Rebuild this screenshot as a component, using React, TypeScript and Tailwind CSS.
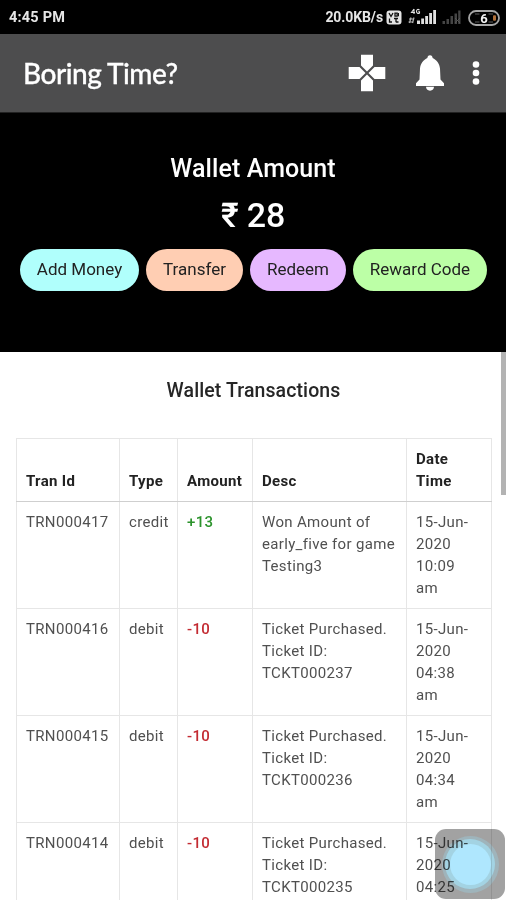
import { clsx } from "clsx";

type Transaction = {
  id: string;
  type: "credit" | "debit";
  amount: number;
  desc: string[];
  date: string[];
};

const transactions: Transaction[] = [
  { id: "TRN000417", type: "credit", amount: 13, desc: ["Won Amount of", "early_five for game", "Testing3"], date: ["15-Jun-", "2020", "10:09", "am"] },
  { id: "TRN000416", type: "debit", amount: -10, desc: ["Ticket Purchased.", "Ticket ID:", "TCKT000237"], date: ["15-Jun-", "2020", "04:38", "am"] },
  { id: "TRN000415", type: "debit", amount: -10, desc: ["Ticket Purchased.", "Ticket ID:", "TCKT000236"], date: ["15-Jun-", "2020", "04:34", "am"] },
  { id: "TRN000414", type: "debit", amount: -10, desc: ["Ticket Purchased.", "Ticket ID:", "TCKT000235"], date: ["15-Jun-", "2020", "04:25"] },
];

const actions = [
  { label: "Add Money", className: "w-[119px] bg-[#b0fffc]" },
  { label: "Transfer", className: "w-[97px] bg-[#ffceb3]" },
  { label: "Redeem", className: "w-[96px] bg-[#e6b8ff]" },
  { label: "Reward Code", className: "w-[134px] bg-[#bcffa6]" },
];

function Lines({ items }: { items: string[] }) {
  return (
    <>
      {items.map((line) => (
        <div key={line} className="whitespace-nowrap">{line}</div>
      ))}
    </>
  );
}

function VolteIcon() {
  return (
    <svg width="16" height="15" viewBox="0 0 16 15" fill="none">
      <rect x="0.5" y="0.5" width="15" height="14" rx="3" fill="#e4e4e4" />
      <path d="M3 3l2 3.5L7 3M9 3.2h2.2v3H9zM3.5 8.5v3.5H6M8 8.5h4M10 8.5v3.8M12.5 12H10" stroke="#111" strokeWidth="1.3" />
      <path d="M12.5 3v3.3" stroke="#111" />
    </svg>
  );
}

function SignalIcon() {
  return (
    <svg width="28" height="17" viewBox="0 0 28 17" fill="#e0e0e0">
      <path d="M6 1L3.5 4.5H7M6 1v5M11.5 2C9.5.5 8.5 2 8.5 3.5S10.2 6 11.5 5V3.7h-1.3" fill="none" stroke="#e0e0e0" strokeWidth="1.1" />
      <path d="M3 9.5L1.5 15M1 11h5M6 9.5L4.5 15M.5 14h5" fill="none" stroke="#b5b5b5" strokeWidth="1.2" />
      <rect x="9" y="12.5" width="3" height="3.5" />
      <rect x="13.2" y="10.5" width="2.8" height="5.5" />
      <rect x="17.2" y="8" width="2.8" height="8" />
      <rect x="21.2" y="5" width="2.8" height="11" />
      <rect x="25.2" y="2" width="2.8" height="14" />
    </svg>
  );
}

function WeakSignalIcon() {
  return (
    <svg width="19" height="15" viewBox="0 0 19 15" fill="#454545">
      <rect x="0.5" y="11" width="2.5" height="3" />
      <rect x="4.5" y="9" width="2.5" height="5" />
      <rect x="8.5" y="6" width="2.5" height="8" />
      <rect x="12.5" y="3.5" width="2.5" height="10.5" />
      <rect x="16.2" y="0.5" width="2.3" height="13.5" />
      <path d="M13 8l5 5M18 8l-5 5" stroke="#555" />
    </svg>
  );
}

function BatteryIcon() {
  return (
    <svg width="32" height="16" viewBox="0 0 32 16">
      <rect x="1" y="1" width="30" height="14" rx="7" fill="none" stroke="#a6a6a6" strokeWidth="1.8" />
      <path d="M7 4h18M7 12h18" stroke="#777" strokeWidth="0.8" />
      <rect x="25" y="5.3" width="3" height="5.4" rx="1" fill="#b06f38" />
      <rect x="11.5" y="2.6" width="9" height="11" fill="#000" />
      <text x="16" y="12.8" textAnchor="middle" fill="#f2f2f2" className="font-['Roboto',sans-serif] text-[13px] font-bold">6</text>
    </svg>
  );
}

function GamepadIcon() {
  return (
    <svg width="38" height="38" viewBox="0 0 38 38" fill="#fff">
      <path d="M13 .7h12v10.8l-6 6-6-6zM37.300 13v12H26.500l-6-6 6-6zM25 37.300H13V26.500l6-6 6 6zM.7 25V13h10.800l6 6-6 6z" />
    </svg>
  );
}

function BellIcon() {
  return (
    <svg width="30" height="36" viewBox="0 0 30 36" fill="#fff">
      <path d="M15 .3c-1.6 0-2.6 1.2-2.6 2.700-3.800 1.700-7 5.500-7.400 10.500L4.500 24.500 1 28.300V31h28v-2.700l-3.500-3.800L25 13.500c-.4-5-3.600-8.800-7.400-10.500 0-1.500-1-2.700-2.600-2.700z" />
      <path d="M11 31.800h8c0 2.200-1.500 3.900-4 3.900s-4-1.700-4-3.900z" />
    </svg>
  );
}

function MenuDots() {
  return (
    <svg width="8" height="24" viewBox="0 0 8 24" fill="#fff">
      <circle cx="4" cy="3.5" r="3.3" />
      <circle cx="4" cy="12" r="3.3" />
      <circle cx="4" cy="20.5" r="3.3" />
    </svg>
  );
}

function StatusBar() {
  return (
    <div className="flex h-[34px] items-center bg-black pt-px pr-[6px] pl-[9px] text-[14px] font-bold text-[#e6e6e6]">
      <span className="text-[14.5px] tracking-[0.2px]">4:45 PM</span>
      <span className="mr-[3px] ml-auto tracking-[-0.1px]">20.0KB/s</span>
      <VolteIcon />
      <span className="-mt-[2px] ml-[6px]"><SignalIcon /></span>
      <span className="ml-[6px]"><WeakSignalIcon /></span>
      <span className="ml-[7px]"><BatteryIcon /></span>
    </div>
  );
}

function AppBar() {
  return (
    <header className="flex h-[79px] items-center border-b border-[#222] bg-[#4d4d4e] pr-[26px] pl-[23px] text-white">
      <h1 className="mr-auto font-['Lato',sans-serif] text-[28px] leading-none font-medium tracking-[-0.5px] [-webkit-text-stroke:0.3px_white]">Boring Time?</h1>
      <GamepadIcon />
      <span className="ml-[29px]"><BellIcon /></span>
      <span className="ml-[27px]"><MenuDots /></span>
    </header>
  );
}

export default function App() {
  return (
    <div className="relative flex h-[900px] w-[506px] flex-col overflow-hidden bg-white font-['Roboto',sans-serif]">
      <StatusBar />
      <AppBar />

      <section className="flex h-[239px] shrink-0 flex-col items-center bg-black pt-[40px] text-white">
        <h2 className="text-[25px] leading-[32px] font-medium tracking-[0.1px]">Wallet Amount</h2>
        <p className="mt-[9px] text-[34px] leading-[42px] font-medium tracking-[-0.2px]">₹ 28</p>
        <div className="mt-[13px] flex gap-[7px] pl-[1px]">
          {actions.map((action) => (
            <button
              key={action.label}
              type="button"
              className={clsx("h-[42px] rounded-full text-[17px] whitespace-nowrap text-[#222]", action.className)}
            >
              {action.label}
            </button>
          ))}
        </div>
      </section>

      <main className="flex min-h-0 flex-1">
        <div className="flex-1 overflow-hidden pl-[16px]">
          <h3 className="mt-[25px] mb-[33px] w-[475px] text-center text-[19.5px] leading-[28px] font-medium tracking-[0.1px] text-[#262626]">
            Wallet Transactions
          </h3>
          <table className="h-[490px] w-[475px] table-fixed border-collapse text-[15px] leading-[22px] tracking-[0.33px] text-[#505050] [&_td]:border [&_td]:border-[#e6e6e6] [&_td]:px-[9px] [&_td]:py-[9px] [&_th]:border [&_th]:border-[#e6e6e6] [&_th]:px-[9px] [&_th]:py-[9px]">
            <colgroup>
              <col className="w-[103px]" />
              <col className="w-[58px]" />
              <col className="w-[75px]" />
              <col className="w-[154px]" />
              <col className="w-[85px]" />
            </colgroup>
            <thead>
              <tr className="h-[63px] text-left align-bottom text-[#222] [&>th]:border-b-[#cfcfcf]!">
                <th>Tran Id</th>
                <th>Type</th>
                <th>Amount</th>
                <th>Desc</th>
                <th><Lines items={["Date", "Time"]} /></th>
              </tr>
            </thead>
            <tbody>
              {transactions.map((t) => (
                <tr key={t.id} className="h-[107px] align-top">
                  <td>{t.id}</td>
                  <td>{t.type}</td>
                  <td className={clsx("font-medium", t.amount > 0 ? "text-[#2c932c]" : "text-[#c32b32]")}>
                    {t.amount > 0 ? `+${t.amount}` : t.amount}
                  </td>
                  <td><Lines items={t.desc} /></td>
                  <td><Lines items={t.date} /></td>
                </tr>
              ))}
            </tbody>
          </table>
        </div>
        {/* scroll thumb */}
        <div className="h-[143px] w-[5px] bg-[#b3b3b3]" />
      </main>

      {/* floating assistive button, multiplied so the rows stay readable under it */}
      <div className="absolute top-[829px] left-[435px] flex size-[70px] items-center justify-center rounded-[11px] bg-[#a2a2a2] mix-blend-multiply">
        <div className="flex size-[57px] items-center justify-center rounded-full bg-[#9fb4bb]">
          <div className="flex size-[50px] items-center justify-center rounded-full bg-[#a3d3e3]">
            <div className="size-[41px] rounded-full bg-[#afe7fe]" />
          </div>
        </div>
      </div>
    </div>
  );
}
